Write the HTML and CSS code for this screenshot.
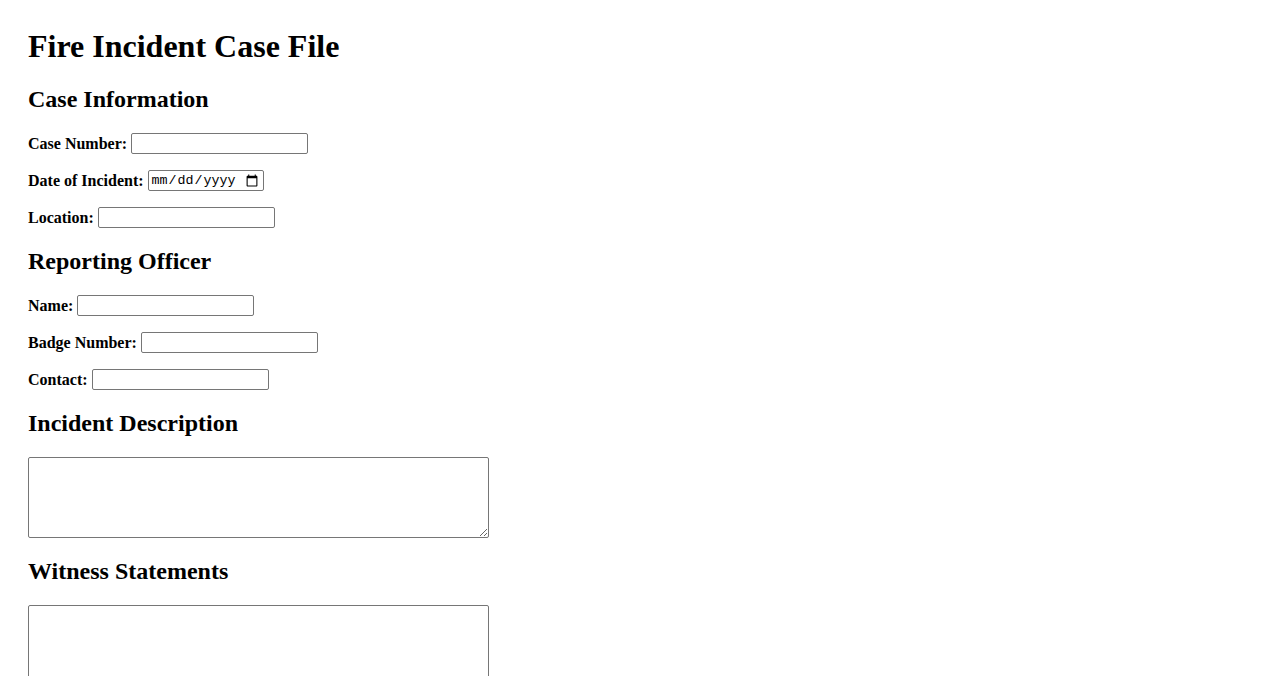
FILE: index.html
```html
<!DOCTYPE html>
<html lang="en">
<head>
<meta charset="utf-8">
<title>Fire Incident Case File</title>
<link rel="stylesheet" href="styles.css">
</head>
<body>
<h1 class="title">Fire Incident Case File</h1>

<h2 class="section-title">Case Information</h2>
<div class="field">
  <label class="field-label" for="case-number">Case Number:</label>
  <input class="text-input" type="text" id="case-number">
</div>
<div class="field">
  <label class="field-label" for="incident-date">Date of Incident:</label>
  <input class="date-input" type="date" id="incident-date">
</div>
<div class="field">
  <label class="field-label" for="location">Location:</label>
  <input class="text-input" type="text" id="location">
</div>

<h2 class="section-title">Reporting Officer</h2>
<div class="field">
  <label class="field-label" for="officer-name">Name:</label>
  <input class="text-input" type="text" id="officer-name">
</div>
<div class="field">
  <label class="field-label" for="badge-number">Badge Number:</label>
  <input class="text-input" type="text" id="badge-number">
</div>
<div class="field">
  <label class="field-label" for="contact">Contact:</label>
  <input class="text-input" type="text" id="contact">
</div>

<h2 class="section-title">Incident Description</h2>
<textarea class="text-area" id="description"></textarea>

<h2 class="section-title">Witness Statements</h2>
<textarea class="text-area" id="witness"></textarea>
</body>
</html>
```

FILE: styles.css
```css
html, body {
  background: #ffffff;
}

body {
  margin: 28px;
  font-family: "Liberation Serif", "Times New Roman", serif;
  font-size: 16px;
  color: #000000;
}

.title {
  font-size: 32px;
  font-weight: bold;
  margin: 0 0 21px;
}

.section-title {
  font-size: 24px;
  font-weight: bold;
  margin: 20px 0;
}

.field {
  display: flex;
  align-items: center;
  gap: 4px;
  height: 21px;
  margin-bottom: 16px;
}

.field-label {
  font-weight: bold;
  font-size: 16px;
}

.text-input,
.date-input {
  box-sizing: border-box;
  height: 21px;
  margin: 0;
  border: 1px solid #767676;
  border-radius: 2px;
  padding: 1px 2px;
  background: #ffffff;
}

.text-input {
  width: 177px;
  font-family: "Liberation Sans", Arial, sans-serif;
  font-size: 13.33px;
}

.date-input {
  width: 116px;
  font-family: "Liberation Mono", "DejaVu Sans Mono", monospace;
  font-size: 13.33px;
  color: #000000;
}

.text-area {
  display: block;
  box-sizing: border-box;
  width: 461px;
  height: 81px;
  margin: 0;
  border: 1px solid #767676;
  border-radius: 2px;
  padding: 2px;
  font-family: "Liberation Mono", monospace;
  font-size: 13.33px;
  resize: both;
}
```
